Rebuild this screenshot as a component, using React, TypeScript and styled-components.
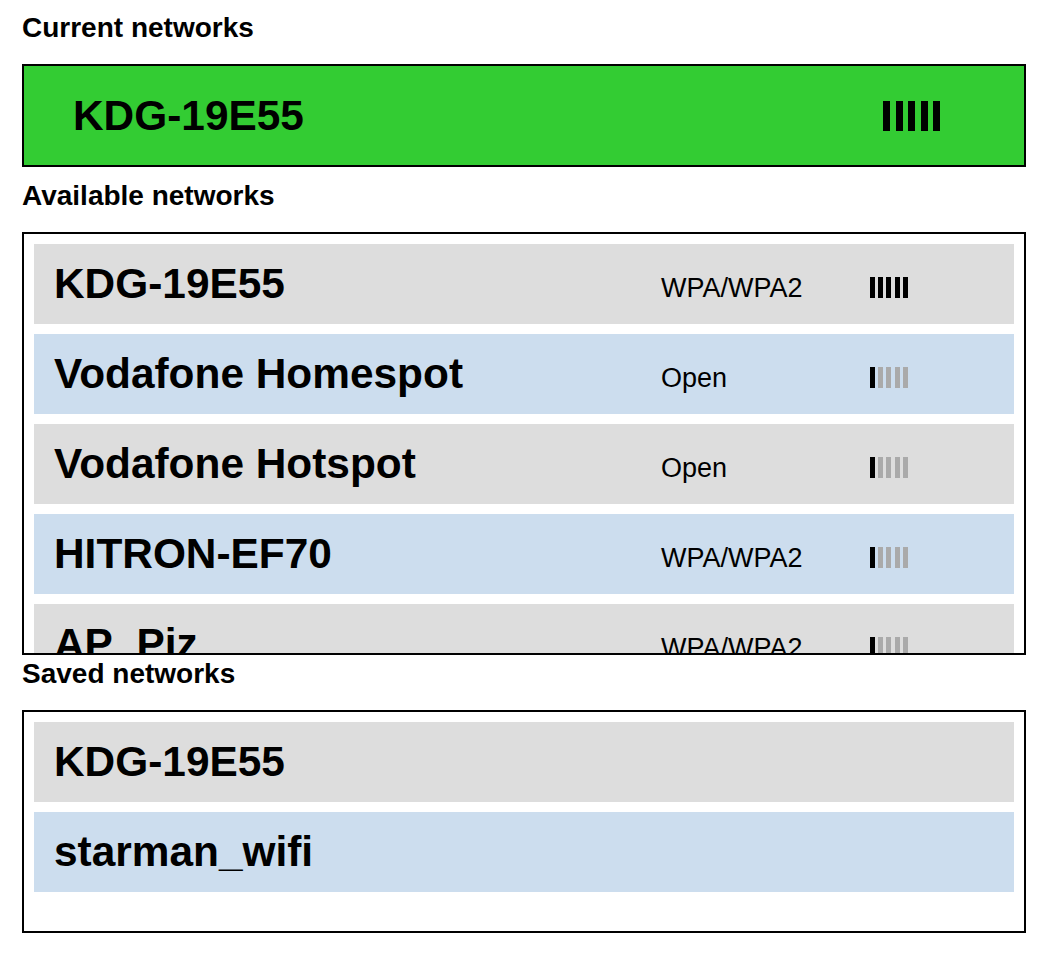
import React from "react";
import styled, { createGlobalStyle } from "styled-components";

const GlobalStyle = createGlobalStyle`
  html, body { margin: 0; padding: 0; background: #ffffff; }
  body { font-family: "Liberation Sans", Arial, Helvetica, sans-serif; color: #000000; }
`;

const Page = styled.div`
  display: flex;
  flex-direction: column;
  width: 1004px;
  padding: 12px 0 20px 22px;
`;

const SectionTitle = styled.h2`
  margin: 0 0 20px 0;
  font-size: 28px;
  line-height: 32px;
  font-weight: 700;
  white-space: nowrap;
`;

const CurrentBox = styled.div`
  box-sizing: border-box;
  height: 103px;
  margin-bottom: 13px;
  border: 2px solid #000000;
  background: #33cc33;
  padding-left: 49px;
  display: flex;
  align-items: center;
`;

const ListBox = styled.div<{ $height: number; $after: number }>`
  box-sizing: border-box;
  height: ${(p) => p.$height}px;
  margin-bottom: ${(p) => p.$after}px;
  border: 2px solid #000000;
  padding: 10px;
  display: flex;
  flex-direction: column;
  gap: 10px;
  overflow: hidden;
`;

const Row = styled.div<{ $tone: "gray" | "blue" }>`
  flex: none;
  height: 80px;
  padding-left: 20px;
  display: flex;
  align-items: center;
  background: ${(p) => (p.$tone === "gray" ? "#dddddd" : "#ccddee")};
`;

const Name = styled.div<{ $w: number }>`
  flex: none;
  width: ${(p) => p.$w}px;
  font-size: 42.4px;
  font-weight: 700;
  white-space: nowrap;
`;

const Security = styled.div`
  flex: none;
  width: 209px;
  margin-top: 8px;
  font-size: 27px;
  font-weight: 400;
  white-space: nowrap;
`;

const Bars = styled.div<{ $size: "big" | "small" }>`
  flex: none;
  display: flex;
  align-items: flex-end;
  gap: ${(p) => (p.$size === "big" ? 5.5 : 3.2)}px;
  margin-top: ${(p) => (p.$size === "big" ? 0 : 7)}px;
`;

const Bar = styled.span<{ $size: "big" | "small"; $on: boolean }>`
  display: block;
  width: ${(p) => (p.$size === "big" ? 7 : 5)}px;
  height: ${(p) => (p.$size === "big" ? 30 : 21)}px;
  background: ${(p) => (p.$on ? "#000000" : "#aaaaaa")};
`;

function Signal({ level, size }: { level: number; size: "big" | "small" }) {
  return (
    <Bars $size={size} aria-label={`signal ${level} of 5`}>
      {[0, 1, 2, 3, 4].map((i) => (
        <Bar key={i} $size={size} $on={i < level} />
      ))}
    </Bars>
  );
}

type Net = { name: string; security: string; level: number };

const available: Net[] = [
  { name: "KDG-19E55", security: "WPA/WPA2", level: 5 },
  { name: "Vodafone Homespot", security: "Open", level: 1 },
  { name: "Vodafone Hotspot", security: "Open", level: 1 },
  { name: "HITRON-EF70", security: "WPA/WPA2", level: 1 },
  { name: "AP_Piz", security: "WPA/WPA2", level: 1 },
];

const saved = ["KDG-19E55", "starman_wifi"];

export default function App() {
  return (
    <>
      <GlobalStyle />
      <Page>
        <SectionTitle>Current networks</SectionTitle>
        <CurrentBox>
          <Name $w={810}>KDG-19E55</Name>
          <Signal level={5} size="big" />
        </CurrentBox>

        <SectionTitle>Available networks</SectionTitle>
        <ListBox $height={423} $after={3}>
          {available.map((n, i) => (
            <Row key={n.name} $tone={i % 2 === 0 ? "gray" : "blue"}>
              <Name $w={607}>{n.name}</Name>
              <Security>{n.security}</Security>
              <Signal level={n.level} size="small" />
            </Row>
          ))}
        </ListBox>

        <SectionTitle>Saved networks</SectionTitle>
        <ListBox $height={223} $after={0}>
          {saved.map((s, i) => (
            <Row key={s} $tone={i % 2 === 0 ? "gray" : "blue"}>
              <Name $w={607}>{s}</Name>
            </Row>
          ))}
        </ListBox>
      </Page>
    </>
  );
}
